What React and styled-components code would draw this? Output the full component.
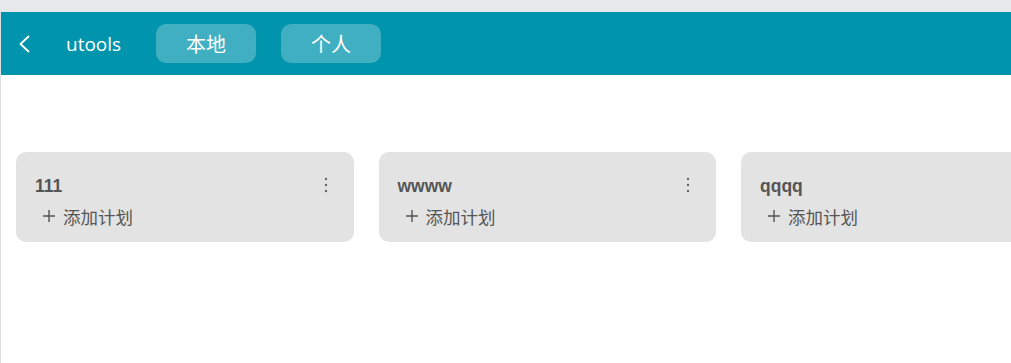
import styled, { createGlobalStyle } from 'styled-components';

const Global = createGlobalStyle`
  html, body {
    margin: 0;
    padding: 0;
    background: #fff;
    font-family: "Open Sans", "Noto Sans CJK SC", sans-serif;
  }
`;

const Page = styled.div`
  width: 1011px;
  height: 363px;
  overflow: hidden;
  display: flex;
  flex-direction: column;
  background: #fff;
`;

const TopStrip = styled.div`
  height: 12px;
  background: #e6e8eb;
  flex-shrink: 0;
`;

const Body = styled.div`
  flex: 1;
  display: flex;
  flex-direction: column;
  border-left: 1px solid #dcdfe3;
`;

const Header = styled.header`
  height: 63px;
  background: #0094ad;
  display: flex;
  align-items: center;
  padding-left: 16px;
  flex-shrink: 0;
`;

const BackBtn = styled.button`
  width: 14px;
  height: 20px;
  padding: 0;
  border: none;
  background: none;
  display: flex;
  align-items: center;
  justify-content: center;
  color: #fff;
  cursor: pointer;
`;

const Title = styled.div`
  margin-left: 35px;
  color: #fff;
  font-size: 19px;
  font-family: "Open Sans", "Noto Sans CJK SC", sans-serif;
  width: 90px;
`;

const Tabs = styled.div`
  display: flex;
  gap: 25px;
`;

const Tab = styled.button`
  width: 100px;
  height: 39px;
  border: none;
  border-radius: 10px;
  background: rgba(255, 255, 255, 0.25);
  color: #fff;
  font-size: 20px;
  font-family: "Noto Sans CJK SC", sans-serif;
  cursor: pointer;
  display: flex;
  align-items: center;
  justify-content: center;
  padding: 0;
`;

const Board = styled.div`
  display: flex;
  gap: 25px;
  padding: 77px 0 0 15px;
  overflow: hidden;
`;

const Card = styled.div`
  flex: 0 0 337.5px;
  height: 90px;
  box-sizing: border-box;
  background: #e3e3e3;
  border-radius: 10px;
  padding: 22px 18px 0 19px;
  display: flex;
  flex-direction: column;
`;

const CardHead = styled.div`
  display: flex;
  align-items: center;
  justify-content: space-between;
  height: 24px;
`;

const CardName = styled.div`
  font-family: "Liberation Sans", Arial, sans-serif;
  font-weight: 700;
  font-size: 17.5px;
  color: #555;
`;

const More = styled.div`
  width: 16px;
  height: 16px;
  color: #666;
  display: flex;
  align-items: center;
  justify-content: center;
  margin-right: 2px;
  margin-top: -2px;
`;

const AddRow = styled.div`
  display: flex;
  align-items: center;
  gap: 7px;
  margin-top: 6px;
  padding-left: 7px;
  height: 24px;
  color: #555;
  font-size: 17.5px;
  font-family: "Noto Sans CJK SC", sans-serif;
  cursor: pointer;
`;

const lists = [
  { name: '111', menu: true },
  { name: 'wwww', menu: true },
  { name: 'qqqq', menu: true },
];

export default function App() {
  return (
    <Page>
      <Global />
      <TopStrip />
      <Body>
        <Header>
          <BackBtn>
            <svg width="12" height="18" viewBox="0 0 12 18" fill="none">
              <path d="M10.5 1.5 L2.5 9 L10.5 16.5" stroke="#fff" strokeWidth="1.8" strokeLinecap="round" strokeLinejoin="round" />
            </svg>
          </BackBtn>
          <Title>utools</Title>
          <Tabs>
            <Tab>本地</Tab>
            <Tab>个人</Tab>
          </Tabs>
        </Header>
        <Board>
          {lists.map(l => (
            <Card key={l.name}>
              <CardHead>
                <CardName>{l.name}</CardName>
                {l.menu && (
                  <More>
                    <svg width="4" height="16" viewBox="0 0 4 16">
                      <circle cx="2" cy="2" r="1.2" fill="currentColor" />
                      <circle cx="2" cy="8" r="1.2" fill="currentColor" />
                      <circle cx="2" cy="14" r="1.2" fill="currentColor" />
                    </svg>
                  </More>
                )}
              </CardHead>
              <AddRow>
                <svg width="14" height="14" viewBox="0 0 14 14">
                  <path d="M7 1 V13 M1 7 H13" stroke="currentColor" strokeWidth="1.4" />
                </svg>
                <span>添加计划</span>
              </AddRow>
            </Card>
          ))}
        </Board>
      </Body>
    </Page>
  );
}
